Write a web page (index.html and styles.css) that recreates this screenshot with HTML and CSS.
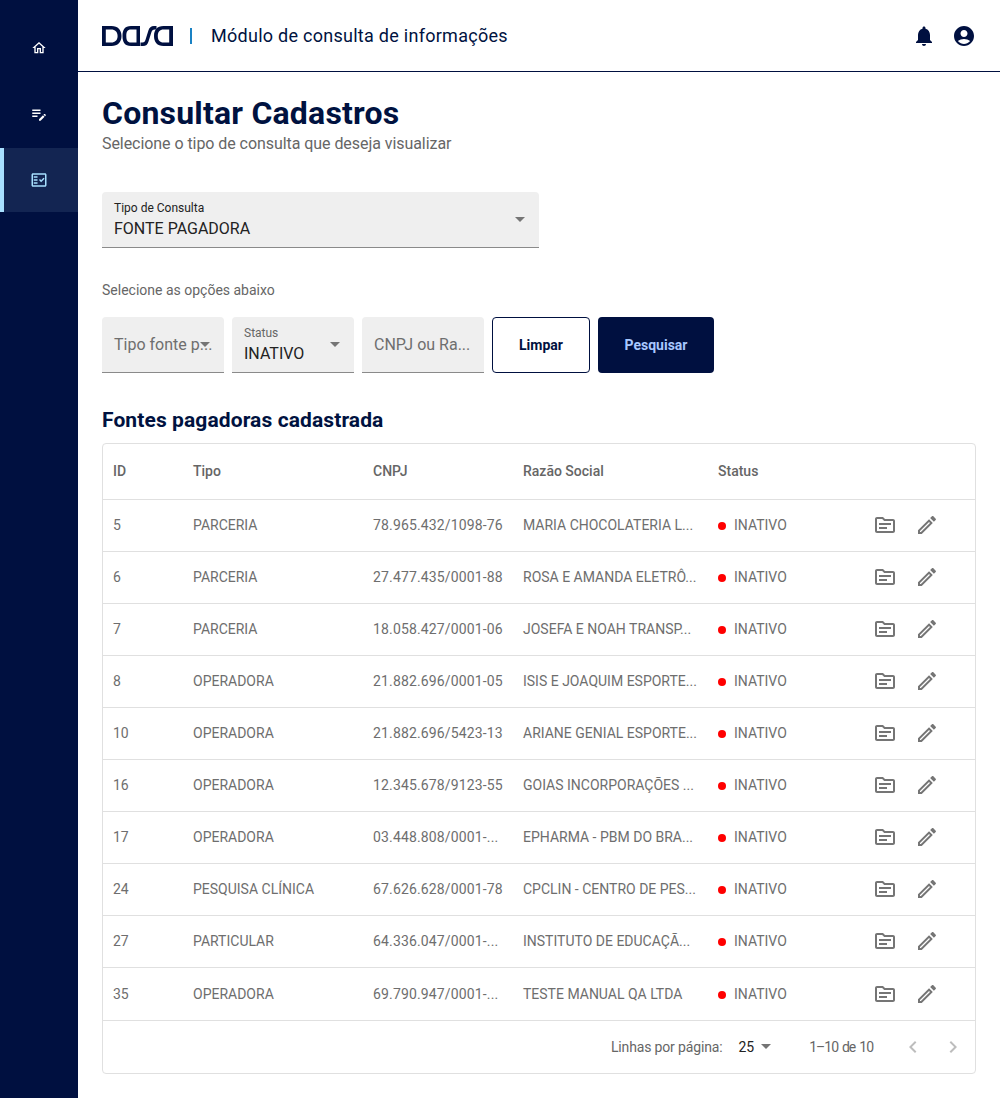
FILE: index.html

```html
<!DOCTYPE html>
<html lang="pt-BR">
<head>
  <meta charset="UTF-8">
  <title>Consultar Cadastros</title>
  <link rel="stylesheet" href="styles.css">
</head>
<body>
  <svg class="icon-defs" width="0" height="0">
    <symbol id="i-topic" viewBox="0 0 24 24"><path d="M20 6h-8l-2-2H4c-1.1 0-2 .9-2 2v12c0 1.1.9 2 2 2h16c1.1 0 2-.9 2-2V8c0-1.1-.9-2-2-2zm0 12H4V6h5.17l2 2H20v10zM6 10h12v2H6zM6 14h8v2H6z"/></symbol>
    <symbol id="i-edit" viewBox="0 0 24 24"><path d="M14.06 9.02l.92.92L5.92 19H5v-.92l9.06-9.06M17.66 3c-.25 0-.51.1-.7.29l-1.83 1.83 3.75 3.75 1.83-1.83c.39-.39.39-1.02 0-1.41l-2.34-2.34c-.2-.2-.45-.29-.71-.29zm-3.6 3.19L3 17.25V21h3.75L17.81 9.94l-3.75-3.75z"/></symbol>
  </svg>

  <nav class="sidebar">
    <a class="nav-item"><svg class="nav-home" viewBox="0 0 24 24"><path d="M12 5.69l5 4.5V18h-2v-6H9v6H7v-7.81l5-4.5M12 3L2 12h3v8h6v-6h2v6h6v-8h3L12 3z"/></svg></a>
    <a class="nav-item"><svg viewBox="0 0 24 24"><path d="M3 10h11v2H3v-2zm0-2h11V6H3v2zm0 8h7v-2H3v2zm15.01-3.13l.71-.71c.39-.39 1.02-.39 1.41 0l.71.71c.39.39.39 1.02 0 1.41l-.71.71-2.12-2.12zm-.71.71l-5.3 5.3V21h2.12l5.3-5.3-2.12-2.12z"/></svg></a>
    <a class="nav-item active"><svg viewBox="0 0 24 24"><path fill-rule="evenodd" d="M20 3H4c-1.1 0-2 .9-2 2v14c0 1.1.9 2 2 2h16c1.1 0 2-.9 2-2V5c0-1.1-.9-2-2-2zm0 16H4V5h16v14z"/><path d="M19.41 10.42L17.99 9l-3.17 3.17-1.41-1.42L12 12.16 14.82 15zM5 7h5v2H5zM5 11h5v2H5zM5 15h5v2H5z"/></svg></a>
  </nav>

  <div class="main">
    <header class="topbar">
      <svg class="logo" viewBox="0 0 71 20">
        <path d="M0 0h9.500c6.500 0 10 4 10 10s-3.500 10-10 10H0zM3.800 3.500v13h5.500c3.700 0 6.300-2.300 6.300-6.500S13 3.500 9.300 3.500z" fill-rule="evenodd"/>
        <path d="M38 0h-9c-6.500 0-8.500 4-8.500 10s2 10 8.500 10h9zM34.500 3.500v13H29c-3.700 0-4.700-2.300-4.700-6.500s1-6.500 4.700-6.500z" fill-rule="evenodd"/>
        <path d="M38.500 20h2.500c3 0 4.500-1.500 5.500-4.500l2.800-9c.6-2 1.500-3 3.500-3h1.700V0h-2.500c-3 0-4.700 1.700-5.600 4.500l-2.800 9c-.6 2-1.200 3-3.200 3h-1.900z"/>
        <path d="M71 0H61.500C55 0 52 4 52 10s3 10 9.500 10H71zM67.200 3.500v13h-5.700c-3.700 0-5.700-2.300-5.700-6.500s2-6.500 5.700-6.500z" fill-rule="evenodd"/>
      </svg>
      <span class="divider"></span>
      <span class="module-title">Módulo de consulta de informações</span>
      <div class="topbar-icons">
        <svg viewBox="0 0 24 24"><path d="M12 22c1.100 0 2-.9 2-2h-4c0 1.100.89 2 2 2zm6-6v-5c0-3.070-1.640-5.640-4.500-6.320V4c0-.83-.67-1.500-1.500-1.500s-1.500.67-1.500 1.500v.68C7.630 5.360 6 7.920 6 11v5l-2 2v1h16v-1l-2-2z"/></svg>
        <svg viewBox="0 0 24 24"><path d="M12 2C6.480 2 2 6.480 2 12s4.480 10 10 10 10-4.480 10-10S17.520 2 12 2zm0 4c1.930 0 3.500 1.570 3.500 3.500S13.930 13 12 13s-3.500-1.570-3.500-3.500S10.070 6 12 6zm0 14c-2.030 0-4.430-.82-6.140-2.880C7.550 15.800 9.680 15 12 15s4.450.8 6.140 2.120C16.430 19.180 14.030 20 12 20z"/></svg>
      </div>
    </header>

    <main class="content">
      <h1>Consultar Cadastros</h1>
      <p class="subtitle">Selecione o tipo de consulta que deseja visualizar</p>

      <div class="field field-wide">
        <label>Tipo de Consulta</label>
        <div class="value">FONTE PAGADORA</div>
        <span class="caret"></span>
      </div>

      <p class="hint">Selecione as opções abaixo</p>

      <div class="filters">
        <div class="field field-small only-placeholder">
          <div class="placeholder">Tipo fonte p...</div>
          <span class="caret"></span>
        </div>
        <div class="field field-small">
          <label class="muted">Status</label>
          <div class="value">INATIVO</div>
          <span class="caret"></span>
        </div>
        <div class="field field-small only-placeholder">
          <div class="placeholder">CNPJ ou Ra...</div>
        </div>
        <button class="btn btn-clear">Limpar</button>
        <button class="btn btn-search">Pesquisar</button>
      </div>

      <h2>Fontes pagadoras cadastrada</h2>

      <div class="table-card">
        <table>
          <thead>
            <tr><th class="c-id">ID</th><th class="c-tipo">Tipo</th><th class="c-cnpj">CNPJ</th><th class="c-razao">Razão Social</th><th class="c-status">Status</th><th></th></tr>
          </thead>
          <tbody id="rows"></tbody>
        </table>
        <div class="pager">
          <span class="pager-label">Linhas por página:</span>
          <span class="pager-size">25</span>
          <span class="caret pager-caret"></span>
          <span class="pager-range">1–10 de 10</span>
          <svg class="pager-arrow" viewBox="0 0 24 24"><path d="M15.410 7.410L14 6l-6 6 6 6 1.410-1.410L10.830 12z"/></svg>
          <svg class="pager-arrow" viewBox="0 0 24 24"><path d="M10 6L8.590 7.410 13.170 12l-4.580 4.590L10 18l6-6z"/></svg>
        </div>
      </div>
    </main>
  </div>

  <script>
    const data = [
      [5, "PARCERIA", "78.965.432/1098-76", "MARIA CHOCOLATERIA L..."],
      [6, "PARCERIA", "27.477.435/0001-88", "ROSA E AMANDA ELETRÔ..."],
      [7, "PARCERIA", "18.058.427/0001-06", "JOSEFA E NOAH TRANSP..."],
      [8, "OPERADORA", "21.882.696/0001-05", "ISIS E JOAQUIM ESPORTE..."],
      [10, "OPERADORA", "21.882.696/5423-13", "ARIANE GENIAL ESPORTE..."],
      [16, "OPERADORA", "12.345.678/9123-55", "GOIAS INCORPORAÇÕES ..."],
      [17, "OPERADORA", "03.448.808/0001-...", "EPHARMA - PBM DO BRA..."],
      [24, "PESQUISA CLÍNICA", "67.626.628/0001-78", "CPCLIN - CENTRO DE PES..."],
      [27, "PARTICULAR", "64.336.047/0001-...", "INSTITUTO DE EDUCAÇÃ..."],
      [35, "OPERADORA", "69.790.947/0001-...", "TESTE MANUAL QA LTDA"]
    ];

    document.getElementById("rows").innerHTML = data.map(r => `
      <tr>
        <td>${r[0]}</td><td>${r[1]}</td><td class="cnpj">${r[2]}</td><td>${r[3]}</td>
        <td><span class="dot"></span>INATIVO</td>
        <td>
          <div class="actions">
            <svg><use href="#i-topic"/></svg>
            <svg><use href="#i-edit"/></svg>
          </div>
        </td>
      </tr>`).join("");
  </script>
</body>
</html>
```

FILE: styles.css

```css
* {
  box-sizing: border-box;
}
body {
  margin: 0;
  display: flex;
  min-height: 1098px;
  font-family: Roboto, 'Liberation Sans', sans-serif;
  color: #001240;
  background: #fff;
}
.icon-defs {
  position: absolute;
}
.sidebar {
  width: 78px;
  flex: none;
  background: #001040;
  padding-top: 16px;
}
.nav-item {
  display: flex;
  align-items: center;
  justify-content: center;
  height: 64px;
  margin-bottom: 2px;
}
.nav-item svg {
  width: 18px;
  height: 18px;
  fill: #fff;
}
.nav-item svg.nav-home {
  width: 16px;
  height: 16px;
}
.nav-item.active {
  background: #132552;
  border-left: 4px solid #a8e0ff;
  padding-right: 4px;
}
.nav-item.active svg {
  fill: #a8e0ff;
}
.main {
  flex: 1;
  min-width: 0;
}
.topbar {
  height: 72px;
  display: flex;
  align-items: center;
  padding: 0 24px;
  border-bottom: 1px solid #001040;
}
.logo {
  width: 71px;
  height: 20px;
  fill: #001040;
}
.divider {
  width: 2px;
  height: 16px;
  background: #1a82c4;
  margin: 0 19px 0 17px;
}
.module-title {
  font-size: 18px;
  letter-spacing: .27px;
}
.topbar-icons {
  margin-left: auto;
  display: flex;
  gap: 16px;
}
.topbar-icons svg {
  width: 24px;
  height: 24px;
  fill: #001040;
}
.content {
  padding: 24px 24px 0;
}
h1 {
  margin: 0;
  font-size: 32px;
  line-height: 34px;
  font-weight: 700;
  letter-spacing: .2px;
}
.subtitle {
  margin: 4px 0 38px;
  font-size: 16px;
  line-height: 20px;
  letter-spacing: -.06px;
  color: #666;
}
.field {
  position: relative;
  height: 56px;
  background: #efefef;
  border-bottom: 1px solid #8a8a8a;
  border-radius: 4px 4px 0 0;
  padding: 9px 12px 0;
}
.field-wide {
  width: 437px;
}
.field-small {
  width: 122px;
}
.field label {
  display: block;
  font-size: 12px;
  line-height: 14px;
  color: #222;
}
.field label.muted {
  color: #666;
}
.value {
  margin-top: 3px;
  font-size: 16px;
  line-height: 22px;
  color: #222;
}
.only-placeholder {
  padding-top: 17px;
}
.placeholder {
  font-size: 16px;
  line-height: 22px;
  color: #6e6e6e;
  white-space: nowrap;
}
.caret {
  position: absolute;
  right: 14px;
  top: 25px;
  border-left: 5px solid transparent;
  border-right: 5px solid transparent;
  border-top: 5px solid #757575;
}
.hint {
  margin: 34px 0 19px;
  font-size: 14px;
  line-height: 16px;
  color: #666;
}
.filters {
  display: flex;
  gap: 8px;
}
.btn {
  height: 56px;
  border-radius: 4px;
  font-family: inherit;
  font-size: 14px;
  font-weight: 700;
}
.btn-clear {
  width: 98px;
  background: #fff;
  color: #001040;
  border: 1px solid #001040;
}
.btn-search {
  width: 116px;
  background: #001040;
  color: #a8c8ff;
  border: none;
}
h2 {
  margin: 35px 0 11px;
  font-size: 21px;
  line-height: 24px;
  font-weight: 700;
  letter-spacing: .1px;
}
.table-card {
  border: 1px solid #e0e0e0;
  border-radius: 4px;
}
table {
  width: 100%;
  border-collapse: collapse;
  table-layout: fixed;
  font-size: 14px;
  color: #6e6e6e;
}
th {
  height: 55px;
  text-align: left;
  font-weight: 500;
  padding: 0 10px;
  color: #666;
}
td {
  height: 52px;
  padding: 0 10px;
  white-space: nowrap;
  overflow: hidden;
}
tr:last-child td {
  height: 53px;
}
tr {
  border-bottom: 1px solid #e0e0e0;
}
.c-id { width: 80px; }
.c-tipo { width: 180px; }
.c-cnpj { width: 150px; }
.c-razao { width: 195px; }
.c-status { width: 135px; }
.cnpj {
  letter-spacing: .15px;
}
.dot {
  display: inline-block;
  width: 8px;
  height: 8px;
  margin-right: 8px;
  border-radius: 50%;
  background: #f00;
}
.actions {
  display: flex;
  align-items: center;
  gap: 18px;
  padding-left: 20px;
}
.actions svg {
  width: 24px;
  height: 24px;
  fill: #757575;
}
.pager {
  height: 52px;
  display: flex;
  align-items: center;
  justify-content: flex-end;
  padding-right: 10px;
  font-size: 14px;
  color: #666;
}
.pager-label {
  letter-spacing: -.15px;
}
.pager-size {
  margin-left: 16px;
  color: #222;
}
.caret.pager-caret {
  position: static;
  margin-left: 7px;
}
.pager-range {
  margin: 0 28px 0 38px;
  letter-spacing: -1px;
  word-spacing: 1.5px;
}
.pager-arrow {
  width: 24px;
  height: 24px;
  fill: #bdbdbd;
  margin-left: 16px;
}
.pager-range + .pager-arrow {
  margin-left: 0;
}
```
